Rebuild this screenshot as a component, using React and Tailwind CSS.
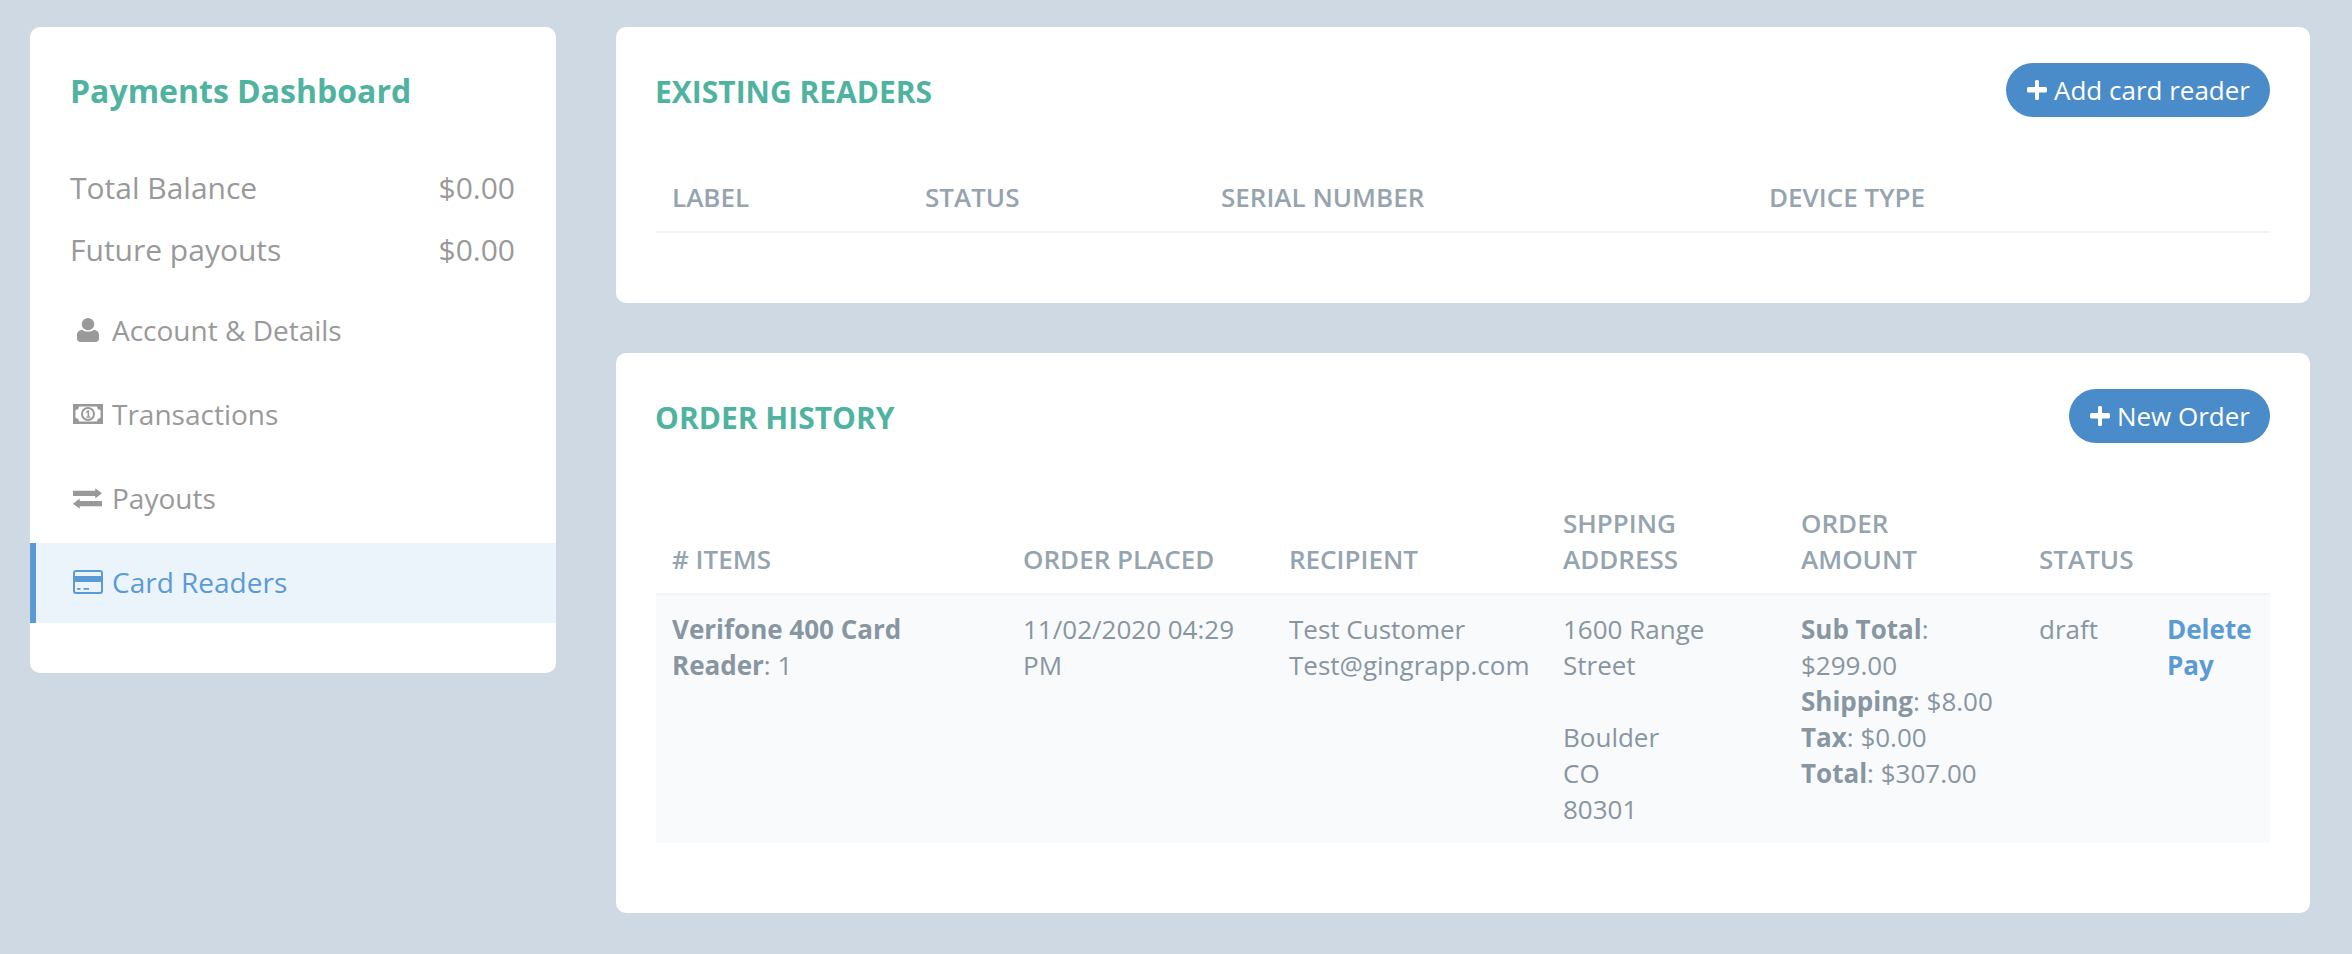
import React from 'react';

// icons redrawn by hand, the package ones were too thin compared with the picture
function UserIcon() {
    return (
        <svg viewBox="0 0 22 24" className="w-[22px] h-[24px] fill-current">
            <circle cx="11" cy="6.2" r="6.2" />
            <path d="M0 20.500V17c0-3 2.400-5 5-5.200 1.500 1.300 3.600 2 6 2s4.500-.7 6-2c2.600.2 5 2.200 5 5.200v3.500c0 2-1.500 3.500-3.500 3.500h-15C1.500 24 0 22.500 0 20.500z" />
        </svg>
    );
}

function MoneyIcon() {
    return (
        <svg viewBox="0 0 30 20" className="w-[30px] h-[20px] fill-current">
            <path fillRule="evenodd" d="M0 0h30v20H0zM6 2.500c0 2-1.500 3.500-3.500 3.500v8C4.500 14 6 15.500 6 17.500h18c0-2 1.500-3.500 3.500-3.500V6C25.500 6 24 4.500 24 2.500z" />
            <path fillRule="evenodd" d="M15 3a7 7 0 1 1 0 14 7 7 0 0 1 0-14zm0 2a5 5 0 1 0 0 10 5 5 0 0 0 0-10z" />
            <path d="M14.800 6.200h1.400v6.300h1.100v1.300h-3.900v-1.300h1.100V8.300l-1.100.7-.6-1.100z" />
        </svg>
    );
}

function TransferIcon() {
    return (
        <svg viewBox="0 0 28 20" className="w-[29px] h-[21px] fill-current">
            <path d="M0 2.500h21.500V0L28 5l-6.500 5V7.500H0z" />
            <path d="M28 12.500H6.500V10L0 15l6.500 5v-2.500H28z" />
        </svg>
    );
}

function CardIcon() {
    return (
        <svg viewBox="0 0 30 24" className="w-[30px] h-[24px] fill-current">
            <path fillRule="evenodd" d="M3 0h24a3 3 0 0 1 3 3v18a3 3 0 0 1-3 3H3a3 3 0 0 1-3-3V3a3 3 0 0 1 3-3zm0 2a1 1 0 0 0-1 1v3h26V3a1 1 0 0 0-1-1zM2 12v9a1 1 0 0 0 1 1h24a1 1 0 0 0 1-1v-9z" />
            <path d="M4 18h3.500v1.700H4zM10.500 18H16v1.700h-5.500z" />
        </svg>
    );
}

function PlusIcon() {
    return (
        <svg viewBox="0 0 20 20" className="w-[20px] h-[20px] mr-[7px] fill-current">
            <path d="M8 1.500A1.500 1.500 0 0 1 9.500 0h1A1.500 1.500 0 0 1 12 1.500V7h6.500A1.500 1.500 0 0 1 20 8.500v2.500a1.500 1.500 0 0 1-1.500 1.500H12v6A1.500 1.500 0 0 1 10.500 20h-1A1.500 1.500 0 0 1 8 18.500v-6H1.500A1.500 1.500 0 0 1 0 11V8.500A1.500 1.500 0 0 1 1.500 7H8z" />
        </svg>
    );
}

const menuItems = [
    { label: 'Account & Details', icon: <UserIcon /> },
    { label: 'Transactions', icon: <MoneyIcon /> },
    { label: 'Payouts', icon: <TransferIcon /> },
    { label: 'Card Readers', icon: <CardIcon />, active: true },
];

function NewButton({ label }) {
    return (
        <button className="flex items-center h-[54px] pl-[21px] pr-[20px] pb-[1px] rounded-full bg-[#4a8bc9] text-white text-[26px]">
            <PlusIcon />
            {label}
        </button>
    );
}

function Sidebar() {
    return (
        <aside className="w-[526px] shrink-0 h-[646px] bg-white rounded-[10px] pt-[46px]">
            <h2 className="pl-[40px] text-[32px] leading-[36px] font-bold text-[#4fb3a0]">Payments Dashboard</h2>
            <div className="mt-[59px] pl-[40px] pr-[41px] text-[30px] leading-[40px] text-[#999999]">
                <div className="flex justify-between"><span>Total Balance</span><span>$0.00</span></div>
                <div className="flex justify-between mt-[22px]"><span>Future payouts</span><span>$0.00</span></div>
            </div>
            <ul className="mt-[21px] flex flex-col gap-[4px]">
                {menuItems.map((item) => (
                    <li
                        key={item.label}
                        className={`flex items-center h-[80px] pb-[2px] border-l-[6px] text-[28px] ${item.active ? 'border-[#5a9bd5] bg-[#ebf3fb] text-[#5a9bd5]' : 'border-transparent text-[#999999]'}`}
                    >
                        <span className="w-[31px] ml-[36px] mr-[9px] flex justify-center">{item.icon}</span>
                        {item.label}
                    </li>
                ))}
            </ul>
        </aside>
    );
}

function Card({ title, action, children }) {
    return (
        <section className="bg-white rounded-[10px] px-[40px] pt-[36px] pb-[70px]">
            <div className="flex items-center justify-between h-[54px]">
                <h2 className="pt-[4px] -ml-[1px] text-[30px] font-bold uppercase text-[#4fb3a0]">{title}</h2>
                <NewButton label={action} />
            </div>
            {children}
        </section>
    );
}

const th = 'px-[16px] pt-[16px] pb-[16px] text-left align-bottom font-semibold uppercase text-[#95a4ae] border-b-2 border-[#f1f5f8]';
const td = 'px-[16px] py-[16px] align-top';

export default function App() {
    return (
        <div className="min-h-screen bg-[#cfd9e4] pl-[30px] pr-[42px] pt-[27px] flex gap-[60px] font-['Open_Sans',sans-serif] text-[26px] leading-[36px]">
            <Sidebar />
            <main className="flex-1 flex flex-col gap-[50px]">
                <Card title="Existing Readers" action="Add card reader">
                    <table className="mt-[46px] w-full table-fixed border-collapse">
                        <colgroup>
                            <col className="w-[253px]" />
                            <col className="w-[296px]" />
                            <col className="w-[548px]" />
                            <col className="w-[517px]" />
                        </colgroup>
                        <thead>
                            <tr>
                                <th className={th}>Label</th>
                                <th className={th}>Status</th>
                                <th className={th}>Serial Number</th>
                                <th className={th}>Device Type</th>
                            </tr>
                        </thead>
                    </table>
                </Card>
                <Card title="Order History" action="New Order">
                    <table className="mt-[46px] w-full table-fixed border-collapse">
                        <colgroup>
                            <col className="w-[351px]" />
                            <col className="w-[266px]" />
                            <col className="w-[274px]" />
                            <col className="w-[238px]" />
                            <col className="w-[238px]" />
                            <col className="w-[128px]" />
                            <col className="w-[119px]" />
                        </colgroup>
                        <thead>
                            <tr>
                                <th className={th}># Items</th>
                                <th className={th}>Order Placed</th>
                                <th className={th}>Recipient</th>
                                <th className={th}>Shpping Address</th>
                                <th className={th}>Order Amount</th>
                                <th className={th}>Status</th>
                                <th className={th}></th>
                            </tr>
                        </thead>
                        <tbody className="bg-[#f9fafc] text-[#8796a1]">
                            <tr>
                                <td className={td}><b>Verifone 400 Card Reader</b>: 1</td>
                                <td className={td}>11/02/2020 04:29 PM</td>
                                <td className={td}>Test Customer<br />Test@gingrapp.com</td>
                                <td className={td}>1600 Range Street<br /><br />Boulder<br />CO<br />80301</td>
                                <td className={td}>
                                    <b>Sub Total</b>: $299.00<br />
                                    <b>Shipping</b>: $8.00<br />
                                    <b>Tax</b>: $0.00<br />
                                    <b>Total</b>: $307.00
                                </td>
                                <td className={td}>draft</td>
                                <td className={`${td} font-bold text-[#5a9bd5]`}>Delete<br />Pay</td>
                            </tr>
                        </tbody>
                    </table>
                </Card>
            </main>
        </div>
    );
}
